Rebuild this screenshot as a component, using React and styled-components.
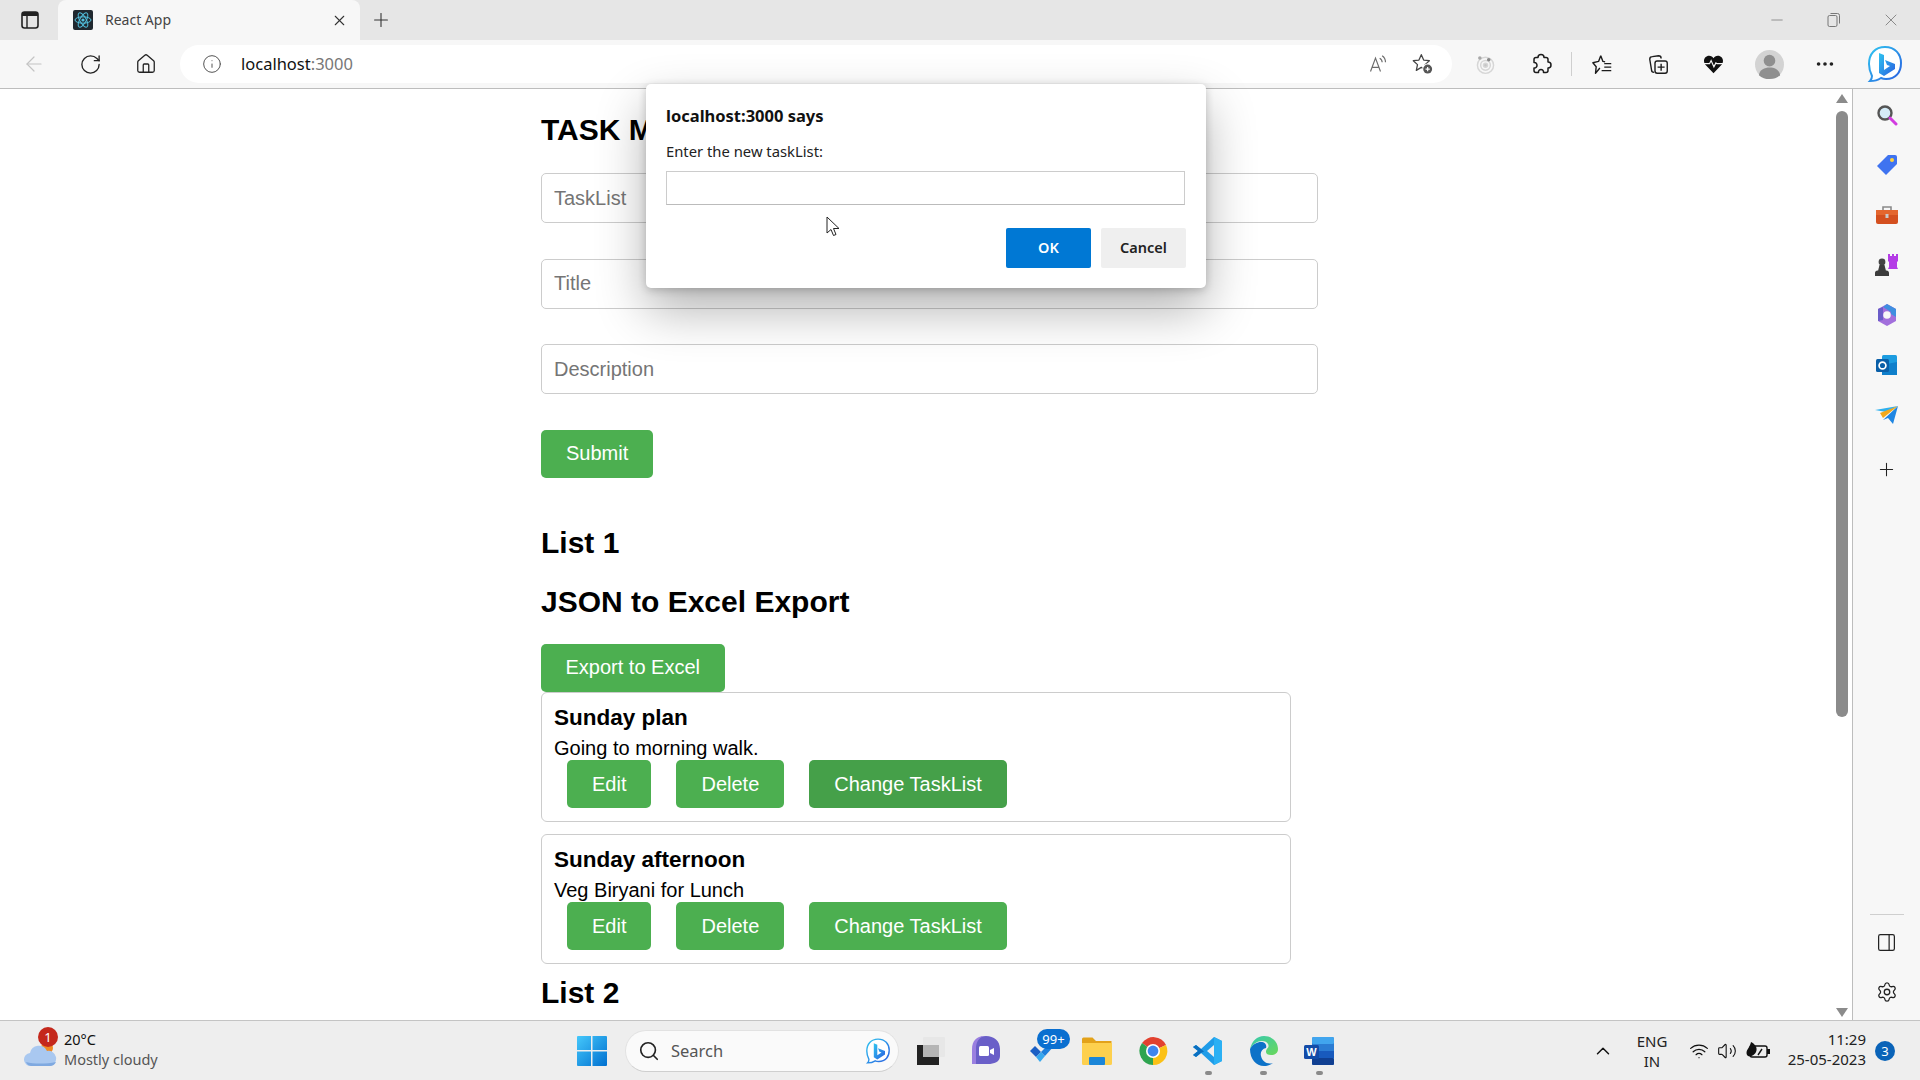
import React from "react";
import styled, { createGlobalStyle } from "styled-components";
import { ArrowLeft, RotateCw, Home, Info, Plus, X, Minus, Search, Settings, ChevronUp, Wifi, Volume2, Ellipsis, PanelRight } from "lucide-react";

const UI_FONT = `"Noto Sans", "Open Sans", sans-serif`;
const PAGE_FONT = `"Liberation Sans", Arial, sans-serif`;

const GlobalStyle = createGlobalStyle`
  html, body { margin: 0; padding: 0; overflow: hidden; background: #fff; }
  * { box-sizing: border-box; }
`;

// --- small drawings

const BingMark = ({ size = 40 }) => (
  <svg width={size} height={size} viewBox="0 0 40 40">
    <defs>
      <linearGradient id="bingG" x1="0" y1="0" x2="1" y2="1">
        <stop offset="0" stopColor="#2fc5f0" />
        <stop offset="1" stopColor="#2a5fe0" />
      </linearGradient>
    </defs>
    <path d="M20 3C10 3 4 10 4 20c0 6 2 10 3 12 0 2-1 4-2 5 4 0 8-1 11-3 2 1 3 1 5 1 10 0 15-7 15-16S30 3 20 3z" fill="#fff" stroke="url(#bingG)" strokeWidth="2" />
    <path d="M14 9l5 2v15l6-4-3-1-2-5 10 4v5l-11 7-5-3z" fill="url(#bingG)" />
  </svg>
);

const ReactTabIcon = () => (
  <svg width="20" height="20" viewBox="0 0 20 20">
    <rect width="20" height="20" rx="2" fill="#20282f" />
    <g fill="none" stroke="#53c1de" strokeWidth="1">
      <ellipse cx="10" cy="10" rx="8" ry="3.2" />
      <ellipse cx="10" cy="10" rx="8" ry="3.2" transform="rotate(60 10 10)" />
      <ellipse cx="10" cy="10" rx="8" ry="3.2" transform="rotate(120 10 10)" />
    </g>
    <circle cx="10" cy="10" r="1.6" fill="#53c1de" />
  </svg>
);

const TabsIcon = () => (
  <svg width="20" height="20" viewBox="0 0 20 20" fill="none">
    <rect x="2" y="2" width="16" height="16" rx="2.5" stroke="#222" strokeWidth="1.6" />
    <path d="M2 4.5A2.5 2.5 0 0 1 4.5 2h11A2.5 2.5 0 0 1 18 4.5V6H2z" fill="#222" />
    <path d="M7 6v12" stroke="#222" strokeWidth="1.4" />
  </svg>
);

const RestoreIcon = () => (
  <svg width="14" height="16" viewBox="0 0 14 16" fill="none" stroke="#777" strokeWidth="1">
    <rect x="1" y="3.5" width="9" height="11" rx="1.5" />
    <path d="M3.5 1.5h7a2 2 0 0 1 2 2v8" />
  </svg>
);

const ReadAloudIcon = () => (
  <svg width="20" height="20" viewBox="0 0 24 24" fill="none" stroke="#6c6c6c" strokeWidth="1.4">
    <path d="M3 21L9 5l6 16M5 16h8" />
    <path d="M14 5c2 1 3 3 3 5M17 2c3 2 4 5 4 8" />
  </svg>
);

const FavAddIcon = () => (
  <svg width="22" height="22" viewBox="0 0 26 26" fill="none">
    <path d="M11 2l2.800 6.400 6.700.7-5 4.600 1.400 6.800-5.900-3.500-5.900 3.500 1.400-6.800-5-4.600 6.700-.7z" stroke="#444" strokeWidth="1.500" strokeLinejoin="round" />
    <circle cx="18.500" cy="19" r="6.500" fill="#fff" />
    <circle cx="18.500" cy="19" r="5.300" fill="#555" />
    <path d="M16 19h5M18.500 16.500v5" stroke="#fff" strokeWidth="1.400" />
  </svg>
);

const RadarIcon = () => (
  <svg width="21" height="21" viewBox="0 0 26 26" fill="none" stroke="#d6d6d6" strokeWidth="1.8">
    <circle cx="13" cy="14" r="10" />
    <circle cx="13" cy="14" r="6" />
    <circle cx="13" cy="14" r="2.500" fill="#c6c6c6" />
    <circle cx="6" cy="5" r="2.200" fill="#a8a8a8" stroke="none" />
    <circle cx="17" cy="7" r="2.200" fill="#8a8a8a" stroke="none" />
  </svg>
);

const ExtensionIcon = () => (
  <svg width="24" height="24" viewBox="0 0 24 24" fill="none" stroke="#1c1c1c" strokeWidth="1.5" strokeLinejoin="round">
    <path d="M9 5.500a3 3 0 1 1 6 0H17a2 2 0 0 1 2 2V10a3 3 0 1 1 0 6v2.500a2 2 0 0 1-2 2h-2.500c.5-4-5.500-4-5 0H7a2 2 0 0 1-2-2V16c4 .5 4-6 0-5.500V7.500a2 2 0 0 1 2-2z" />
  </svg>
);

const FavListIcon = () => (
  <svg width="21" height="21" viewBox="0 0 24 24" fill="none" stroke="#1c1c1c" strokeWidth="1.600" strokeLinejoin="round">
    <path d="M10 2l2.500 6.500L15 9M9 16l-5 6 .8-7.500L1 10l6.500-1.500L10 2" />
    <path d="M14 11h8M14 15h8M11 19h11" />
  </svg>
);

const CollectionsIcon = () => (
  <svg width="21" height="21" viewBox="0 0 24 24" fill="none" stroke="#1c1c1c" strokeWidth="1.600">
    <path d="M7 21c-2 0-3-1-3-3L2 6c0-2 1-3 3-3l7-1c2 0 3 1 3 3" />
    <rect x="8" y="8" width="14" height="14" rx="2.500" />
    <path d="M15 11v8M11 15h8" />
  </svg>
);

const HeartIcon = () => (
  <svg width="21" height="19" viewBox="0 0 26 24">
    <path d="M13 23L2.500 12C-1 7 2 1 7.500 1c2.500 0 4.500 1.500 5.500 3 1-1.500 3-3 5.500-3C24 1 27 7 23.500 12z" fill="#111" />
    <path d="M1 11h7l2-4 3.500 8 2.500-5 1.500 1H25" fill="none" stroke="#f7f7f7" strokeWidth="1.500" />
  </svg>
);

const AvatarIcon = () => (
  <svg width="29" height="29" viewBox="0 0 30 30">
    <circle cx="15" cy="15" r="15" fill="#d3d3d3" />
    <circle cx="15" cy="11" r="6" fill="#8f8f8f" />
    <path d="M4 26c1-6 6-8 11-8s10 2 11 8c-3 3-7 4-11 4s-8-1-11-4z" fill="#8f8f8f" />
  </svg>
);

const MagnifierIcon = () => (
  <svg width="22" height="22" viewBox="0 0 22 22" fill="none">
    <circle cx="9" cy="9" r="6.500" fill="#d5ecf8" stroke="#555" strokeWidth="2.400" />
    <path d="M14 14l6 6" stroke="#d23ce0" strokeWidth="3" strokeLinecap="round" />
  </svg>
);

const TagIcon = () => (
  <svg width="22" height="22" viewBox="0 0 22 22">
    <path d="M12 1h7a2 2 0 0 1 2 2v7L10 21 1 12z" fill="#3f73f0" />
    <circle cx="16" cy="6" r="2" fill="#ffd23c" />
  </svg>
);

const ToolboxIcon = () => (
  <svg width="24" height="22" viewBox="0 0 24 22" fill="none">
    <path d="M8 6V3h8v3" stroke="#8a8a8a" strokeWidth="1.600" />
    <rect x="1" y="6" width="22" height="14" rx="2" fill="#d4501f" />
    <rect x="1" y="6" width="22" height="5" fill="#e4662e" />
    <rect x="10.500" y="10" width="3" height="4" fill="#c9c9c9" />
  </svg>
);

const ChessIcon = () => (
  <svg width="24" height="24" viewBox="0 0 24 24">
    <path d="M13 1h2v2h2V1h2v2h2V1h2v7l-1 1v5l1 2H13l1-2V9l-1-1z" fill="#b43ce6" />
    <circle cx="7" cy="9" r="3.400" fill="#444" />
    <path d="M4.500 12h5l1.500 6H3zM0 20c0-1.500 1-2.500 2.500-2.500h9c1.500 0 2.500 1 2.500 2.500v3H0z" fill="#3c3c3c" />
  </svg>
);

const M365Icon = () => (
  <svg width="22" height="24" viewBox="0 0 22 24" fill="none">
    <path d="M11 1l9 5v12l-9 5-9-5V6z" fill="#a26fdc" />
    <path d="M11 1l9 5v8l-5-3V9L7 4z" fill="#3f8fe0" />
    <path d="M2 6l5-2v13l-5 1z" fill="#6a5cc8" />
    <circle cx="11" cy="12" r="3.800" fill="#f7f7f7" />
  </svg>
);

const OutlookIcon = () => (
  <svg width="22" height="22" viewBox="0 0 22 22">
    <rect x="6" y="1" width="15" height="20" rx="1.500" fill="#1c9ce0" />
    <path d="M6 11l15-3v13H6z" fill="#0f7fcb" />
    <rect x="0" y="5" width="13" height="13" rx="1.500" fill="#0a5fa8" />
    <circle cx="6.500" cy="11.500" r="3.400" fill="none" stroke="#fff" strokeWidth="1.700" />
  </svg>
);

const SendIcon = () => (
  <svg width="24" height="20" viewBox="0 0 24 20">
    <path d="M0 5l23-4-12 6z" fill="#2fb0ee" />
    <path d="M5 8l18-7-15 12z" fill="#f2a81c" />
    <path d="M23 1l-5 18-5-6-5 2z" fill="#1f86e2" />
  </svg>
);

const CloudIcon = () => (
  <svg width="34" height="26" viewBox="0 0 34 26">
    <circle cx="23" cy="7" r="6" fill="#f08a24" />
    <path d="M7 25a6.500 6.500 0 0 1-1-13 9 9 0 0 1 17-2 7.500 7.500 0 0 1 3 15z" fill="#a9c8f0" />
    <path d="M7 25a6 6 0 0 1-5-4c8 2 20 2 30 0a7 7 0 0 1-6 4z" fill="#7fa9e0" />
  </svg>
);

const WindowsIcon = () => (
  <svg width="30" height="30" viewBox="0 0 30 30">
    <defs>
      <linearGradient id="winG" x1="0" y1="0" x2="1" y2="1">
        <stop offset="0" stopColor="#45c8fb" />
        <stop offset="1" stopColor="#0070d0" />
      </linearGradient>
    </defs>
    <path d="M0 1a1 1 0 0 1 1-1h13v14H0zM15.500 0H29a1 1 0 0 1 1 1v13H15.500zM0 15.500h14V30H1a1 1 0 0 1-1-1zM15.500 15.500H30V29a1 1 0 0 1-1 1H15.500z" fill="url(#winG)" />
  </svg>
);

const TaskViewIcon = () => (
  <svg width="30" height="30" viewBox="0 0 30 30">
    <rect x="1" y="9" width="22" height="20" fill="#222" />
    <rect x="7" y="1" width="22" height="20" rx="1" fill="#e6e6e6" opacity=".9" />
    <rect x="7" y="9" width="16" height="12" fill="#b5b5b5" />
  </svg>
);

const ChatIcon = () => (
  <svg width="30" height="32" viewBox="0 0 30 32">
    <path d="M15 1c8 0 14 5 14 13v7c0 6-6 8-12 8H1c1-2 1-4 1-8v-7C2 6 7 1 15 1z" fill="#6a5fc8" />
    <path d="M1 14C1 6 6 1 13 1 7 3 5 8 5 14v15H1z" fill="#9a7fe0" />
    <rect x="8" y="11" width="10" height="10" rx="1.500" fill="#fff" />
    <path d="M19 15l4-2v7l-4-2z" fill="#fff" />
  </svg>
);

const TodoIcon = () => (
  <svg width="26" height="24" viewBox="0 0 26 24">
    <path d="M1 12l5-5 6 6-5 5z" fill="#1b5fc4" />
    <path d="M7 18l5-5 4 4-5 6z" fill="#38a8ee" />
    <path d="M12 13L22 3l3 4-9 10z" fill="#1e7fdc" />
  </svg>
);

const FolderIcon = () => (
  <svg width="32" height="28" viewBox="0 0 32 28">
    <path d="M1 2a1.500 1.500 0 0 1 1.500-1.500h9L15 4h15.500v5H1z" fill="#e3a21a" />
    <path d="M1 6h30v20.500a1.500 1.500 0 0 1-1.500 1.500h-27A1.500 1.500 0 0 1 1 26.500z" fill="#fdd04e" />
    <rect x="8" y="20" width="16" height="8" rx="1" fill="#1b86d8" />
  </svg>
);

const ChromeIcon = () => (
  <svg width="30" height="30" viewBox="0 0 30 30">
    <path d="M15 15L4 7A14 14 0 0 1 28 9z" fill="#e2412f" />
    <path d="M15 15L28 9a14 14 0 0 1-13 20z" fill="#fbc116" />
    <path d="M15 15v14A14 14 0 0 1 4 7z" fill="#2ea44f" />
    <circle cx="15" cy="15" r="7" fill="#fff" />
    <circle cx="15" cy="15" r="5.400" fill="#3f85ee" />
  </svg>
);

const VSCodeIcon = () => (
  <svg width="30" height="30" viewBox="0 0 30 30">
    <path d="M21 1l8 4v20l-8 4-13-12-5 4-3-2 5-4-5-4 3-2 5 4z" fill="#1f9ce8" />
    <path d="M21 1v28l8-4V5z" fill="#2ab0f4" />
    <path d="M21 9l-7 6 7 6z" fill="#eee" />
    <path d="M8 17l-5 4-3-2 5-4-5-4 3-2 5 4 3 2.500z" fill="#0a6fc0" />
  </svg>
);

const EdgeIcon = () => (
  <svg width="30" height="32" viewBox="0 0 30 32">
    <defs>
      <linearGradient id="edgeG" x1="0" y1="0" x2="1" y2="1">
        <stop offset="0" stopColor="#36c9b0" />
        <stop offset="1" stopColor="#6ad85a" />
      </linearGradient>
    </defs>
    <path d="M15 1c8 0 14 6 14 13 0 4-3 6-7 6-3 0-5-1-5-3 0-4 4-4 2-8-1-2-3-3-6-3-5 0-9 3-12 8C3 6 8 1 15 1z" fill="url(#edgeG)" />
    <path d="M1 14c3-5 7-7 11-7 4 0 6 3 5 6-4 1-6 4-5 8 1 5 6 9 12 7-3 2-6 3-9 3C7 31 1 24 1 14z" fill="#0d72c8" />
  </svg>
);

const WordIcon = () => (
  <svg width="30" height="28" viewBox="0 0 30 28">
    <rect x="8" y="0" width="22" height="28" rx="1.500" fill="#2b7cd3" />
    <rect x="8" y="0" width="22" height="7" rx="1.500" fill="#41a5ee" />
    <rect x="8" y="14" width="22" height="7" fill="#185abd" />
    <rect x="8" y="21" width="22" height="7" rx="1.500" fill="#103f91" />
    <rect x="0" y="8" width="15" height="14" rx="1.500" fill="#134ba8" />
    <text x="7.500" y="19" textAnchor="middle" fontSize="11" fontWeight="700" fontFamily="Liberation Sans, sans-serif" fill="#fff">W</text>
  </svg>
);

const BatteryIcon = () => (
  <svg width="26" height="22" viewBox="0 0 26 22" fill="none">
    <rect x="5" y="6" width="17" height="11" rx="2" stroke="#111" strokeWidth="1.400" />
    <rect x="22" y="9" width="3" height="5" fill="#111" />
    <path d="M2 15c-2-5 3-7 4-13 4 2 7 6 5 10-1 3-7 6-9 3z" fill="#111" />
    <path d="M13 15l4-6" stroke="#111" strokeWidth="1.400" />
  </svg>
);

const CursorIcon = () => (
  <svg width="14" height="22" viewBox="0 0 14 22">
    <path d="M1 1v16l4-3.500 2.500 6 2.500-1-2.500-6H13z" fill="#fff" stroke="#222" strokeWidth="1" strokeLinejoin="round" />
  </svg>
);

const Triangle = ({ down }) => (
  <svg width="12" height="9" viewBox="0 0 12 9">
    <path d={down ? "M0 0h12L6 9z" : "M0 9h12L6 0z"} fill="#8b8b8b" />
  </svg>
);

// --- data

const TASKS = [
  { title: "Sunday plan", text: "Going to morning walk.", hovered: true },
  { title: "Sunday afternoon", text: "Veg Biryani for Lunch", hovered: false },
];

const SIDEBAR_ICONS = [MagnifierIcon, TagIcon, ToolboxIcon, ChessIcon, M365Icon, OutlookIcon, SendIcon];

export default function App() {
  return (
    <>
      <GlobalStyle />
      <Screen>
        <TabStrip>
          <TabsButton><TabsIcon /></TabsButton>
          <Tab>
            <ReactTabIcon />
            <TabTitle>React App</TabTitle>
            <X size={17} strokeWidth={1.5} color="#333" />
          </Tab>
          <NewTab><Plus size={22} strokeWidth={1.2} color="#333" /></NewTab>
          <WindowControls>
            <WindowButton><Minus size={18} strokeWidth={1} color="#777" /></WindowButton>
            <WindowButton><RestoreIcon /></WindowButton>
            <WindowButton><X size={20} strokeWidth={1} color="#777" /></WindowButton>
          </WindowControls>
        </TabStrip>

        <Toolbar>
          <NavButton><ArrowLeft size={24} strokeWidth={1.2} color="#c4c4c4" /></NavButton>
          <NavButton><RotateCw size={23} strokeWidth={1.4} color="#222" /></NavButton>
          <NavButton><Home size={22} strokeWidth={1.4} color="#222" /></NavButton>
          <AddressBar>
            <Info size={20} strokeWidth={1.2} color="#555" />
            <Url>localhost<UrlPort>:3000</UrlPort></Url>
            <AddressActions>
              <ReadAloudIcon />
              <FavAddIcon />
            </AddressActions>
          </AddressBar>
          <ToolSlot $first><RadarIcon /></ToolSlot>
          <ToolSlot><ExtensionIcon /></ToolSlot>
          <ToolDivider />
          <ToolSlot><FavListIcon /></ToolSlot>
          <ToolSlot><CollectionsIcon /></ToolSlot>
          <ToolSlot><HeartIcon /></ToolSlot>
          <ToolSlot><AvatarIcon /></ToolSlot>
          <ToolSlot><Ellipsis size={22} strokeWidth={2} color="#222" /></ToolSlot>
          <BingSlot><BingMark /></BingSlot>
        </Toolbar>

        <Workspace>
          <Page>
            <PageTitle>TASK MANAGER</PageTitle>
            <Field placeholder="TaskList" />
            <Field placeholder="Title" />
            <Field placeholder="Description" />
            <SubmitButton>Submit</SubmitButton>
            <SectionTitle $top={48}>List 1</SectionTitle>
            <SectionTitle $top={25}>JSON to Excel Export</SectionTitle>
            <ExportButton>Export to Excel</ExportButton>
            {TASKS.map((task) => (
              <TaskCard key={task.title}>
                <TaskTitle>{task.title}</TaskTitle>
                <TaskText>{task.text}</TaskText>
                <TaskActions>
                  <GreenButton>Edit</GreenButton>
                  <GreenButton>Delete</GreenButton>
                  <GreenButton $dark={task.hovered}>Change TaskList</GreenButton>
                </TaskActions>
              </TaskCard>
            ))}
            <SectionTitle $top={12}>List 2</SectionTitle>

            <Dialog>
              <DialogTitle>localhost:3000 says</DialogTitle>
              <DialogMessage>Enter the new taskList:</DialogMessage>
              <DialogInput />
              <DialogActions>
                <OkButton>OK</OkButton>
                <CancelButton>Cancel</CancelButton>
              </DialogActions>
            </Dialog>
            <Pointer><CursorIcon /></Pointer>
          </Page>

          <Scrollbar>
            <Triangle />
            <ScrollThumb />
            <Triangle down />
          </Scrollbar>

          <Sidebar>
            {SIDEBAR_ICONS.map((Icon, i) => (
              <SideSlot key={i}><Icon /></SideSlot>
            ))}
            <SideSlot $add><Plus size={21} strokeWidth={1.2} color="#222" /></SideSlot>
            <SideFooter>
              <SideRule />
              <SideSlot><PanelRight size={21} strokeWidth={1.4} color="#222" /></SideSlot>
              <SideSlot><Settings size={22} strokeWidth={1.4} color="#222" /></SideSlot>
            </SideFooter>
          </Sidebar>
        </Workspace>

        <Taskbar>
          <Weather>
            <WeatherIcon>
              <CloudIcon />
              <RedBadge>1</RedBadge>
            </WeatherIcon>
            <WeatherText>
              <Temp>20°C</Temp>
              <Forecast>Mostly cloudy</Forecast>
            </WeatherText>
          </Weather>
          <StartSlot><WindowsIcon /></StartSlot>
          <SearchPill>
            <Search size={22} strokeWidth={1.8} color="#222" />
            <SearchLabel>Search</SearchLabel>
            <BingMark size={28} />
          </SearchPill>
          <AppSlot $first><TaskViewIcon /></AppSlot>
          <AppSlot><ChatIcon /></AppSlot>
          <AppSlot>
            <TodoIcon />
            <CountBadge>99+</CountBadge>
          </AppSlot>
          <AppSlot><FolderIcon /></AppSlot>
          <AppSlot><ChromeIcon /></AppSlot>
          <AppSlot $running><VSCodeIcon /></AppSlot>
          <AppSlot $running><EdgeIcon /></AppSlot>
          <AppSlot $running><WordIcon /></AppSlot>
          <Tray>
            <ChevronUp size={22} strokeWidth={1.6} color="#111" />
            <Lang><span>ENG</span><span>IN</span></Lang>
            <TrayIcons>
              <Wifi size={20} strokeWidth={1.5} color="#111" />
              <Volume2 size={20} strokeWidth={1.3} color="#111" />
              <BatteryIcon />
            </TrayIcons>
            <Clock><span>11:29</span><span>25-05-2023</span></Clock>
            <BlueBadge>3</BlueBadge>
          </Tray>
        </Taskbar>
      </Screen>
    </>
  );
}

// styles
const Screen = styled.div`
  width: 1920px;
  height: 1080px;
  display: flex;
  flex-direction: column;
  overflow: hidden;
  font-family: ${UI_FONT};
`;

const TabStrip = styled.div`
  height: 40px;
  display: flex;
  align-items: flex-end;
  background-color: #e6e6e6;
  padding-left: 20px;
`;
const TabsButton = styled.div`
  width: 20px;
  height: 40px;
  display: flex;
  align-items: center;
  margin-right: 18px;
`;
const Tab = styled.div`
  width: 302px;
  height: 40px;
  display: flex;
  align-items: center;
  padding: 0 12px 0 15px;
  background-color: #f7f7f7;
  border-radius: 8px 8px 0 0;
`;
const TabTitle = styled.span`
  flex: 1;
  margin: -2px 0 0 12px;
  font-size: 14px;
  color: #444;
`;
const NewTab = styled.div`
  height: 40px;
  display: flex;
  align-items: center;
  margin-left: 10px;
`;
const WindowControls = styled.div`
  margin-left: auto;
  height: 40px;
  display: flex;
  padding-right: 1px;
`;
const WindowButton = styled.div`
  width: 57px;
  display: flex;
  align-items: center;
  justify-content: center;
`;

const Toolbar = styled.div`
  height: 49px;
  display: flex;
  align-items: center;
  padding: 0 0 0 6px;
  background-color: #f7f7f7;
  border-bottom: 1px solid #bdbdbd;
`;
const NavButton = styled.div`
  width: 56px;
  display: flex;
  justify-content: center;
`;
const AddressBar = styled.div`
  width: 1272px;
  height: 38px;
  margin-left: 6px;
  display: flex;
  align-items: center;
  padding: 0 18px 0 22px;
  background-color: #fff;
  border-radius: 19px;
`;
const Url = styled.span`
  margin: -1px 0 0 19px;
  font-size: 16.5px;
  color: #111;
`;
const UrlPort = styled.span`
  color: #777;
`;
const AddressActions = styled.div`
  margin-left: auto;
  display: flex;
  align-items: center;
  gap: 24px;
`;
const ToolSlot = styled.div`
  width: 55.5px;
  display: flex;
  justify-content: center;
  margin-left: ${(p) => (p.$first ? "6px" : "0")};
`;
const ToolDivider = styled.div`
  width: 1px;
  height: 24px;
  margin: 0 3px 0 2px;
  background-color: #cfcfcf;
`;
const BingSlot = styled.div`
  margin-left: 12px;
  display: flex;
`;

const Workspace = styled.div`
  flex: 1;
  min-height: 0;
  display: flex;
`;
const Page = styled.div`
  position: relative;
  z-index: 1;
  width: 1832px;
  padding: 24px 0 0 541px;
  background-color: #fff;
  font-family: ${PAGE_FONT};
  color: #000;
`;
const PageTitle = styled.h1`
  margin: 0 0 26px;
  font-size: 30px;
  line-height: 34px;
  font-weight: 700;
`;
const Field = styled.input.attrs({ type: "text" })`
  display: block;
  width: 777px;
  height: 50px;
  margin-bottom: 35.5px;
  padding: 0 12px;
  font-family: inherit;
  font-size: 20px;
  background: #fff;
  border: 1px solid #ccc;
  border-radius: 5px;
  outline: none;
  &::placeholder {
    color: #757575;
  }
`;
const GreenButton = styled.button`
  height: 48px;
  padding: 0 25px;
  font-family: inherit;
  font-size: 20px;
  color: #fff;
  background-color: ${(p) => (p.$dark ? "#45a049" : "#4caf50")};
  border: none;
  border-radius: 5px;
`;
const SubmitButton = styled(GreenButton)`
  display: block;
  margin-top: 1px;
`;
const ExportButton = styled(GreenButton)`
  display: block;
  margin-top: 25px;
  padding: 0 24.5px;
`;
const SectionTitle = styled.h2`
  margin: ${(p) => p.$top}px 0 0;
  font-size: 30px;
  line-height: 34px;
  font-weight: 700;
`;
const TaskCard = styled.div`
  width: 750px;
  height: 130.5px;
  margin-bottom: 11.5px;
  padding: 12px 12px 0;
  background: #fff;
  border: 1px solid #ccc;
  border-radius: 6px;
`;
const TaskTitle = styled.h3`
  margin: 0 0 5.5px;
  font-size: 22.5px;
  line-height: 26px;
  font-weight: 700;
`;
const TaskText = styled.p`
  margin: 0;
  font-size: 20px;
  line-height: 24px;
`;
const TaskActions = styled.div`
  display: flex;
  gap: 25px;
  padding-left: 13px;
`;

const Dialog = styled.div`
  position: absolute;
  top: -5px;
  left: 646px;
  width: 560px;
  height: 204px;
  padding: 21px 20px 0;
  background-color: #fff;
  border-radius: 5px;
  font-family: ${UI_FONT};
  box-shadow: 0 22px 50px rgba(0, 0, 0, 0.3), 0 2px 8px rgba(0, 0, 0, 0.2);
`;
const DialogTitle = styled.div`
  font-size: 16.5px;
  line-height: 22px;
  font-weight: 700;
  color: #111;
`;
const DialogMessage = styled.div`
  margin-top: 14px;
  font-size: 14.8px;
  line-height: 20px;
  color: #222;
`;
const DialogInput = styled.input.attrs({ type: "text" })`
  display: block;
  width: 519px;
  height: 34px;
  margin-top: 10px;
  border: 1px solid #ccc;
  border-bottom-color: #bbb;
  outline: none;
`;
const DialogActions = styled.div`
  display: flex;
  justify-content: flex-end;
  gap: 10px;
  margin-top: 23px;
`;
const DialogButton = styled.button`
  width: 85px;
  height: 40px;
  padding: 0 0 2px;
  font-family: inherit;
  font-size: 14.5px;
  font-weight: 600;
  border: none;
  border-radius: 2px;
`;
const OkButton = styled(DialogButton)`
  color: #fff;
  background-color: #0078d4;
`;
const CancelButton = styled(DialogButton)`
  color: #222;
  background-color: #efefef;
`;
const Pointer = styled.div`
  position: absolute;
  top: 127px;
  left: 826px;
  display: flex;
`;

const Scrollbar = styled.div`
  width: 20px;
  padding: 5px 0 3px;
  display: flex;
  flex-direction: column;
  align-items: center;
  background-color: #fff;
`;
const ScrollThumb = styled.div`
  width: 12px;
  height: 606px;
  margin: 8px 0 auto;
  background-color: #8b8b8b;
  border-radius: 6px;
`;
const Sidebar = styled.div`
  flex: 1;
  display: flex;
  flex-direction: column;
  align-items: center;
  padding-top: 1px;
  background-color: #f7f7f7;
  border-left: 1px solid #bdbdbd;
`;
const SideSlot = styled.div`
  height: 50px;
  margin-top: ${(p) => (p.$add ? "4px" : "0")};
  display: flex;
  align-items: center;
  justify-content: center;
`;
const SideFooter = styled.div`
  margin-top: auto;
  padding-bottom: 3px;
  display: flex;
  flex-direction: column;
  align-items: center;
`;
const SideRule = styled.div`
  width: 34px;
  height: 1px;
  margin-bottom: 2px;
  background-color: #cfcfcf;
`;

const Taskbar = styled.div`
  height: 60px;
  display: flex;
  align-items: center;
  background-color: #eeeeee;
  border-top: 1px solid #c4c4c4;
`;
const Weather = styled.div`
  width: 577px;
  padding-left: 24px;
  display: flex;
  align-items: center;
`;
const WeatherIcon = styled.div`
  position: relative;
  width: 34px;
  height: 26px;
  margin-top: 6px;
`;
const RedBadge = styled.span`
  position: absolute;
  top: -14px;
  left: 14px;
  width: 20px;
  height: 20px;
  border-radius: 50%;
  background-color: #c4281c;
  color: #fff;
  font-size: 13px;
  line-height: 20px;
  text-align: center;
`;
const WeatherText = styled.div`
  margin: -4px 0 0 6px;
  display: flex;
  flex-direction: column;
  font-size: 14.5px;
  line-height: 20px;
`;
const Temp = styled.span`
  color: #111;
`;
const Forecast = styled.span`
  color: #555;
`;
const StartSlot = styled.div`
  width: 30px;
  height: 30px;
  display: flex;
`;
const SearchPill = styled.div`
  width: 274px;
  height: 42px;
  margin-left: 18px;
  padding: 0 6px 0 12px;
  display: flex;
  align-items: center;
  background-color: #fafafa;
  border: 1px solid #e2e2e2;
  border-bottom-color: #cfcfcf;
  border-radius: 21px;
`;
const SearchLabel = styled.span`
  flex: 1;
  margin-left: 11px;
  font-size: 16.5px;
  color: #555;
`;
const AppSlot = styled.div`
  position: relative;
  width: 55.5px;
  height: 59px;
  margin-left: ${(p) => (p.$first ? "4px" : "0")};
  display: flex;
  align-items: center;
  justify-content: center;
  &::after {
    content: "";
    display: ${(p) => (p.$running ? "block" : "none")};
    position: absolute;
    bottom: 5px;
    left: 24px;
    width: 7px;
    height: 4px;
    border-radius: 2px;
    background-color: #8a8a8a;
  }
`;
const CountBadge = styled.span`
  position: absolute;
  top: 8px;
  left: 23px;
  width: 33px;
  height: 20px;
  border-radius: 10px;
  background-color: #0a6fd0;
  color: #fff;
  font-size: 13px;
  line-height: 20px;
  text-align: center;
`;
const Tray = styled.div`
  flex: 1;
  display: flex;
  align-items: center;
  padding-left: 245px;
`;
const Lang = styled.div`
  width: 40px;
  margin-left: 18px;
  display: flex;
  flex-direction: column;
  align-items: center;
  font-size: 15px;
  line-height: 20px;
  color: #222;
`;
const TrayIcons = styled.div`
  margin-left: 17px;
  display: flex;
  align-items: center;
  gap: 8px;
`;
const Clock = styled.div`
  width: 90px;
  margin: -3px 0 0 5px;
  display: flex;
  flex-direction: column;
  align-items: flex-end;
  font-size: 15px;
  line-height: 20px;
  color: #222;
`;
const BlueBadge = styled.span`
  width: 20px;
  height: 20px;
  margin-left: 9px;
  border-radius: 50%;
  background-color: #0a63b8;
  color: #fff;
  font-size: 13px;
  line-height: 20px;
  text-align: center;
`;
